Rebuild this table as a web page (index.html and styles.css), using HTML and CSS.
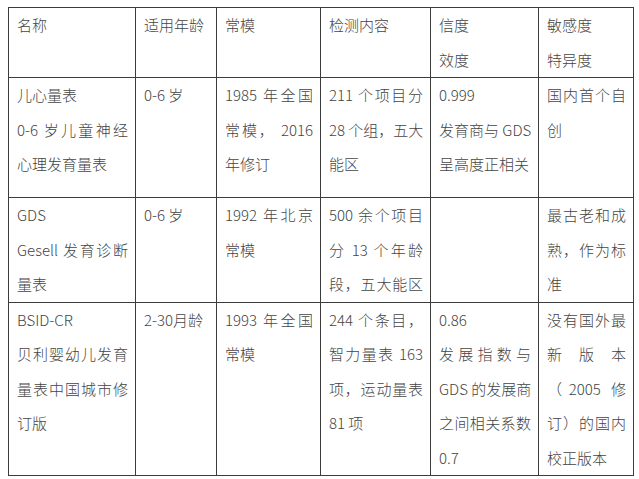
FILE: index.html
```html
<!DOCTYPE html>
<html lang="zh-CN">
<head>
<meta charset="utf-8">
<link rel="stylesheet" href="styles.css">
</head>
<body>
<table class="grid">
  <colgroup>
    <col class="c1"><col class="c2"><col class="c3"><col class="c4"><col class="c5"><col class="c6">
  </colgroup>
  <tr class="r0">
    <td><span class="ln">名称</span></td>
    <td><span class="ln">适用年龄</span></td>
    <td><span class="ln">常模</span></td>
    <td><span class="ln">检测内容</span></td>
    <td><span class="ln">信度</span><span class="ln">效度</span></td>
    <td><span class="ln">敏感度</span><span class="ln">特异度</span></td>
  </tr>
  <tr class="r1">
    <td><span class="ln">儿心量表</span><span class="ln j">0-6 岁儿童神经</span><span class="ln">心理发育量表</span></td>
    <td><span class="ln">0-6 岁</span></td>
    <td><span class="ln j">1985 年全国</span><span class="ln j">常模， 2016</span><span class="ln">年修订</span></td>
    <td><span class="ln j">211 个项目分</span><span class="ln j">28 个组，五大</span><span class="ln">能区</span></td>
    <td><span class="ln">0.999</span><span class="ln j">发育商与 GDS</span><span class="ln">呈高度正相关</span></td>
    <td><span class="ln j">国内首个自</span><span class="ln">创</span></td>
  </tr>
  <tr class="r2">
    <td><span class="ln">GDS</span><span class="ln j">Gesell 发育诊断</span><span class="ln">量表</span></td>
    <td><span class="ln">0-6 岁</span></td>
    <td><span class="ln j">1992 年北京</span><span class="ln">常模</span></td>
    <td><span class="ln j">500 余个项目</span><span class="ln j">分 13 个年龄</span><span class="ln j">段，五大能区</span></td>
    <td></td>
    <td><span class="ln j">最古老和成</span><span class="ln j">熟，作为标</span><span class="ln">准</span></td>
  </tr>
  <tr class="r3">
    <td><span class="ln">BSID-CR</span><span class="ln j">贝利婴幼儿发育</span><span class="ln j">量表中国城市修</span><span class="ln">订版</span></td>
    <td><span class="ln">2-30月龄</span></td>
    <td><span class="ln j">1993 年全国</span><span class="ln">常模</span></td>
    <td><span class="ln j">244 个条目，</span><span class="ln j">智力量表 163</span><span class="ln j">项，运动量表</span><span class="ln">81 项</span></td>
    <td><span class="ln">0.86</span><span class="ln j">发展指数与</span><span class="ln j">GDS 的发展商</span><span class="ln j">之间相关系数</span><span class="ln">0.7</span></td>
    <td><span class="ln j">没有国外最</span><span class="ln j">新　版　本</span><span class="ln j">（2005 修</span><span class="ln j">订）的国内</span><span class="ln">校正版本</span></td>
  </tr>
</table>
</body>
</html>
```

FILE: styles.css
```css
html, body {
  margin: 0;
  padding: 0;
  background: #ffffff;
}
body {
  font-family: "Noto Sans CJK SC", "Noto Sans", sans-serif;
  font-size: 15px;
  font-weight: 300;
  color: #444444;
}
.grid {
  border-collapse: collapse;
  table-layout: fixed;
  width: 625px;
  margin: 7px 0 0 8px;
}
.c1 { width: 127px; }
.c2 { width: 81px; }
.c3 { width: 104px; }
.c4 { width: 110px; }
.c5 { width: 108px; }
.c6 { width: 95px; }
.grid td {
  border: 1px solid #3c3c3c;
  vertical-align: top;
  padding: 0 7px 0 8px;
  line-height: 34.5px;
}
.r0 { height: 69px; }
.r1 { height: 120px; }
.r2 { height: 103px; }
.r3 { height: 171px; }
.ln {
  display: block;
  white-space: nowrap;
}
.j {
  text-align: justify;
  text-align-last: justify;
}
```
